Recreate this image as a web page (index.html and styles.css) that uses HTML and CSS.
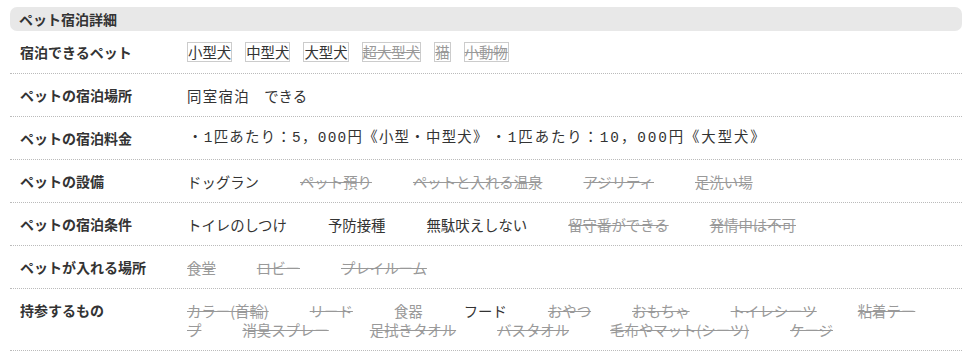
FILE: index.html
```html
<!DOCTYPE html>
<html lang="ja">
<head>
<meta charset="utf-8">
<title>ペット宿泊詳細</title>
<link rel="stylesheet" href="styles.css">
</head>
<body>
<div class="detail">
  <div class="head">ペット宿泊詳細</div>
  <div class="row">
    <div class="label">宿泊できるペット</div>
    <div class="value">
      <span class="tag">小型犬</span><span class="tag">中型犬</span><span class="tag">大型犬</span><span class="tag off">超大型犬</span><span class="tag off">猫</span><span class="tag off">小動物</span>
    </div>
  </div>
  <div class="row">
    <div class="label">ペットの宿泊場所</div>
    <div class="value"><span class="place">同室宿泊</span><span>できる</span></div>
  </div>
  <div class="row">
    <div class="label">ペットの宿泊料金</div>
    <div class="value price"><span class="fee">・1匹あたり：5，000円《小型・中型犬》</span><span class="fee wide">・1匹あたり：10，000円《大型犬》</span></div>
  </div>
  <div class="row">
    <div class="label">ペットの設備</div>
    <div class="value">
      <span class="item">ドッグラン</span><span class="item off">ペット預り</span><span class="item off">ペットと入れる温泉</span><span class="item off">アジリティ</span><span class="item off">足洗い場</span>
    </div>
  </div>
  <div class="row">
    <div class="label">ペットの宿泊条件</div>
    <div class="value">
      <span class="item">トイレのしつけ</span><span class="item">予防接種</span><span class="item">無駄吠えしない</span><span class="item off">留守番ができる</span><span class="item off">発情中は不可</span>
    </div>
  </div>
  <div class="row">
    <div class="label">ペットが入れる場所</div>
    <div class="value">
      <span class="item off">食堂</span><span class="item off">ロビー</span><span class="item off">プレイルーム</span>
    </div>
  </div>
  <div class="row">
    <div class="label">持参するもの</div>
    <div class="value wrap">
      <span class="item off">カラー(首輪)</span><span class="item off">リード</span><span class="item dim">食器</span><span class="item">フード</span><span class="item off">おやつ</span><span class="item off">おもちゃ</span><span class="item off">トイレシーツ</span><span class="item off">粘着テープ</span><span class="item off">消臭スプレー</span><span class="item off">足拭きタオル</span><span class="item off">バスタオル</span><span class="item off">毛布やマット(シーツ)</span><span class="item off">ケージ</span>
    </div>
  </div>
</div>
</body>
</html>
```
FILE: styles.css
```css
html, body {
  margin: 0;
  padding: 0;
  background: #fff;
}
body {
  font-family: "Noto Sans CJK JP", "Noto Sans", sans-serif;
  color: #333;
  font-size: 14.4px;
}
.detail {
  margin: 7px 10px 0 10px;
  width: 952px;
}
.head {
  background: #e8e8e8;
  border-radius: 7px;
  height: 24px;
  line-height: 24px;
  padding-left: 9px;
  font-size: 14px;
  font-weight: bold;
  color: #333;
}
.row {
  display: flex;
  border-bottom: 1px dotted #bbb;
  padding: 12px 0 11px;
  line-height: 19px;
}
.label {
  width: 167px;
  flex: none;
  padding-left: 10px;
  font-weight: bold;
  font-size: 14px;
  color: #333;
}
.value {
  flex: 1;
  padding-right: 37px;
  min-width: 0;
}
.tag {
  display: inline-block;
  border: 1px solid #ccc;
  line-height: 18px;
  margin-right: 13px;
  vertical-align: top;
  margin-top: -1px;
}
.tag.off {
  color: #999;
  text-decoration: line-through;
  text-decoration-color: #999;
}
.place {
  letter-spacing: 1.4px;
  margin-right: 14px;
}
.price {
  font-family: "Liberation Mono", "Noto Sans CJK JP", monospace;
  letter-spacing: 1.3px;
  padding-left: 1px;
}
.fee {
  margin-right: 10px;
}
.fee.wide {
  letter-spacing: 1.9px;
}
.item {
  margin-right: 41px;
}
.item.dim {
  color: #999;
}
.item.off {
  color: #999;
  text-decoration: line-through;
  text-decoration-color: #999;
}
```
